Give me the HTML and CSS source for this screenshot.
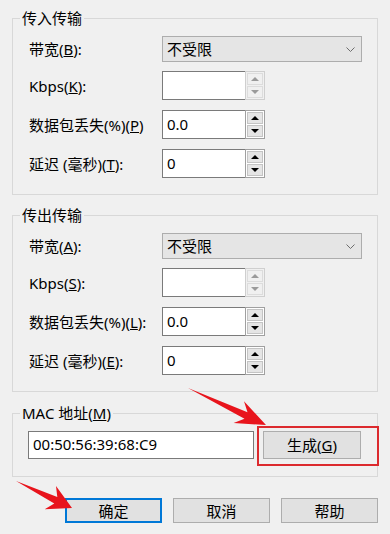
FILE: index.html
```html
<!DOCTYPE html>
<html lang="zh-CN">

<head>
    <meta charset="UTF-8">
    <meta name="viewport" content="width=device-width, initial-scale=1.0">
    <title>网络适配器高级设置</title>
    <link rel="stylesheet" href="styles.css">
</head>

<body>
    <div class="dialog">
        <fieldset class="group">
            <legend>传入传输</legend>
            <div class="group-body">
                <div class="row row-combo">
                    <label class="label">带宽(<u>B</u>):</label>
                    <div class="combo">
                        <span>不受限</span>
                        <svg class="chevron" width="9" height="5" viewBox="0 0 9 5"><polyline points="0.5,0.5 4.5,4.5 8.5,0.5" fill="none" stroke="#6d6d6d" stroke-width="1"/></svg>
                    </div>
                </div>
                <div class="row">
                    <label class="label">Kbps(<u>K</u>):</label>
                    <div class="spin disabled">
                        <div class="spin-text"></div>
                        <div class="spin-btns"><span class="spin-btn up"></span><span class="spin-btn down"></span></div>
                    </div>
                </div>
                <div class="row">
                    <label class="label">数据包丢失(%)(<u>P</u>)</label>
                    <div class="spin">
                        <div class="spin-text">0.0</div>
                        <div class="spin-btns"><span class="spin-btn up"></span><span class="spin-btn down"></span></div>
                    </div>
                </div>
                <div class="row">
                    <label class="label">延迟 (毫秒)(<u>T</u>):</label>
                    <div class="spin">
                        <div class="spin-text">0</div>
                        <div class="spin-btns"><span class="spin-btn up"></span><span class="spin-btn down"></span></div>
                    </div>
                </div>
            </div>
        </fieldset>

        <fieldset class="group">
            <legend>传出传输</legend>
            <div class="group-body">
                <div class="row row-combo">
                    <label class="label">带宽(<u>A</u>):</label>
                    <div class="combo">
                        <span>不受限</span>
                        <svg class="chevron" width="9" height="5" viewBox="0 0 9 5"><polyline points="0.5,0.5 4.5,4.5 8.5,0.5" fill="none" stroke="#6d6d6d" stroke-width="1"/></svg>
                    </div>
                </div>
                <div class="row">
                    <label class="label">Kbps(<u>S</u>):</label>
                    <div class="spin disabled">
                        <div class="spin-text"></div>
                        <div class="spin-btns"><span class="spin-btn up"></span><span class="spin-btn down"></span></div>
                    </div>
                </div>
                <div class="row">
                    <label class="label">数据包丢失(%)(<u>L</u>):</label>
                    <div class="spin">
                        <div class="spin-text">0.0</div>
                        <div class="spin-btns"><span class="spin-btn up"></span><span class="spin-btn down"></span></div>
                    </div>
                </div>
                <div class="row">
                    <label class="label">延迟 (毫秒)(<u>E</u>):</label>
                    <div class="spin">
                        <div class="spin-text">0</div>
                        <div class="spin-btns"><span class="spin-btn up"></span><span class="spin-btn down"></span></div>
                    </div>
                </div>
            </div>
        </fieldset>

        <fieldset class="group group-mac">
            <legend>MAC 地址(<u>M</u>)</legend>
            <div class="group-body">
                <div class="mac-row">
                    <div class="mac-box">00:50:56:39:68:C9</div>
                    <button class="btn btn-gen">生成(<u>G</u>)</button>
                </div>
            </div>
        </fieldset>

        <div class="actions">
            <button class="btn btn-default">确定</button>
            <button class="btn">取消</button>
            <button class="btn">帮助</button>
        </div>

        <!-- screenshot annotations -->
        <svg class="marks" width="390" height="534" viewBox="0 0 390 534">
            <rect x="258" y="427" width="120" height="38" fill="none" stroke="#dc2a2e" stroke-width="2"/>
            <polygon points="188,388 247.5,412.3 244,401.2 266,425 233.6,423 244.5,418.7" fill="#e8141c"/>
            <polygon points="16,481 57.3,497 56,485.9 72,508 44.7,509.3 54.3,503.4" fill="#e8141c"/>
        </svg>
    </div>
</body>

</html>
```

FILE: styles.css
```css
:root {
    --UiFont: "Noto Sans", "Noto Sans CJK SC", sans-serif;
    --Bg: #f0f0f0;
    --GroupLine: #d8d8d8;
    --InputLine: #7a7a7a;
    --ButtonLine: #adadad;
}

body {
    margin: 0;
    padding: 0;
    background-color: var(--Bg);
    font-family: var(--UiFont);
    font-size: 15px;
    color: #000;
}

.dialog {
    position: relative;
    width: 390px;
    height: 534px;
    padding-top: 8px;
    box-sizing: border-box;
    overflow: hidden;
}

.group {
    margin: 0 12px;
    padding: 0;
    min-width: 0;
    border: 1px solid var(--GroupLine);
}

.group + .group {
    margin-top: 10px;
}

.group-mac {
    margin-top: 11px !important;
}

.group legend {
    margin-left: 7px;
    padding: 0 2px;
    line-height: 20px;
}

.group-body {
    padding: 8px 0 16px 16px;
}

.row {
    display: flex;
    align-items: center;
    height: 29px;
}

.row + .row {
    margin-top: 10px;
}

.row-combo {
    height: 26px;
}

.row-combo + .row {
    margin-top: 9px;
}

.label {
    width: 133px;
    line-height: 20px;
    white-space: nowrap;
}

.combo {
    display: flex;
    align-items: center;
    justify-content: space-between;
    width: 200px;
    height: 26px;
    box-sizing: border-box;
    padding: 0 6px 0 4px;
    background-color: #e5e5e5;
    border: 1px solid var(--ButtonLine);
    line-height: 20px;
}

.spin {
    display: flex;
    width: 103px;
    height: 29px;
}

.spin-text {
    width: 83px;
    box-sizing: border-box;
    padding: 2px 4px 0;
    background-color: #fff;
    border: 1px solid var(--InputLine);
    border-right: none;
    line-height: 22px;
}

.spin-btns {
    display: flex;
    flex-direction: column;
    gap: 1px;
    width: 20px;
    box-sizing: border-box;
    padding: 1px;
    background-color: #fff;
    border: 1px solid #a0a0a0;
}

.spin-btn {
    flex: 1;
    display: flex;
    align-items: center;
    justify-content: center;
    background-color: #e5e5e5;
    border: 1px solid #c4c4c4;
}

.spin-btn::after {
    content: "";
    border-left: 4px solid transparent;
    border-right: 4px solid transparent;
}

.spin-btn.up::after {
    border-bottom: 4px solid #000;
}

.spin-btn.down::after {
    border-top: 4px solid #000;
}

.spin.disabled .spin-btns {
    border-color: #cfcfcf;
    background-color: #f0f0f0;
}

.spin.disabled .spin-btn {
    background-color: #f0f0f0;
    border-color: #dcdcdc;
}

.spin.disabled .spin-btn.up::after {
    border-bottom-color: #9a9a9a;
}

.spin.disabled .spin-btn.down::after {
    border-top-color: #9a9a9a;
}

.group-mac .group-body {
    padding: 8px 0 17px 15px;
}

.mac-row {
    display: flex;
    gap: 9px;
    height: 28px;
}

.mac-box {
    width: 226px;
    box-sizing: border-box;
    padding: 1px 4px 0;
    background-color: #fff;
    border: 1px solid var(--InputLine);
    line-height: 22px;
}

.btn {
    margin: 0;
    padding: 0;
    font-family: var(--UiFont);
    font-size: 15px;
    color: #000;
    background-color: #e1e1e1;
    border: 1px solid var(--ButtonLine);
    border-radius: 0;
    line-height: 20px;
}

.btn-gen {
    width: 98px;
    height: 28px;
}

.actions {
    display: flex;
    justify-content: flex-end;
    gap: 11px;
    margin-top: 21px;
    padding-right: 12px;
}

.actions .btn {
    width: 97px;
    height: 25px;
}

.btn-default {
    border: 2px solid #0078d7;
}

.marks {
    position: absolute;
    top: 0;
    left: 0;
    pointer-events: none;
}
```
